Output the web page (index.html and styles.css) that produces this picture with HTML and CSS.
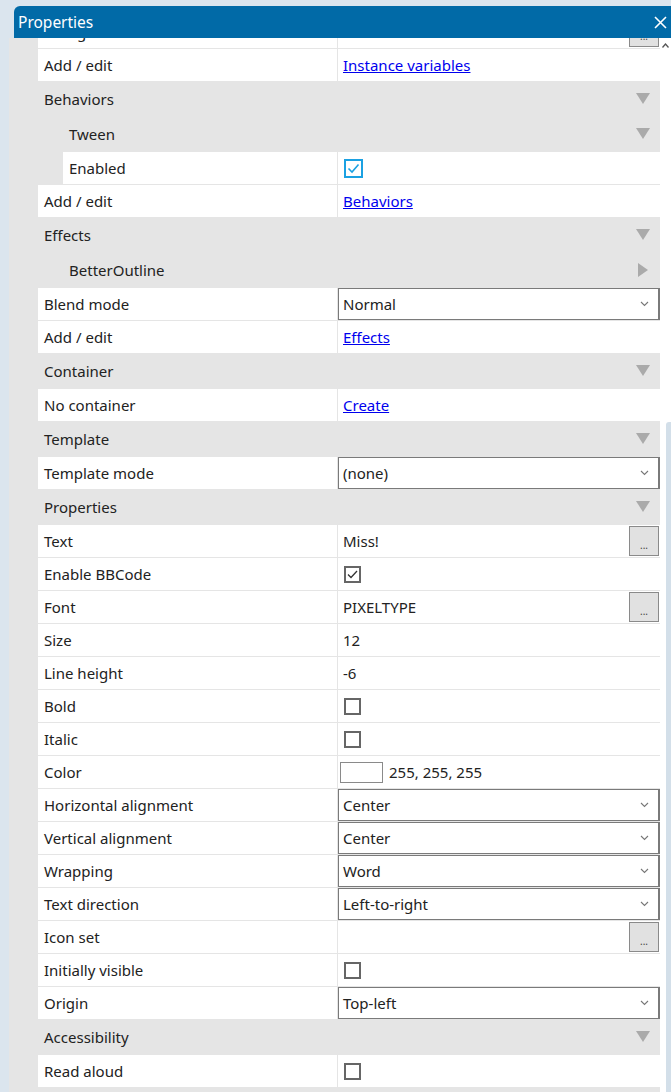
FILE: index.html
```html
<!DOCTYPE html>
<html>
<head>
    <link rel="stylesheet" href="styles.css">
</head>
<body>
    <div class="window">
        <div class="titlebar">
            <span class="title">Properties</span>
            <svg class="close" width="13" height="13" viewBox="0 0 13 13"><path d="M1 1 L12 12 M12 1 L1 12" stroke="#fff" stroke-width="1.6"/></svg>
        </div>
        <div class="viewport">
            <div class="grid">
                <div class="row">
                    <div class="label">String value</div>
                    <div class="value"><button class="dots">...</button></div>
                </div>
                <div class="row">
                    <div class="label">Add / edit</div>
                    <div class="value"><a href="#">Instance variables</a></div>
                </div>
                <div class="category">Behaviors <span class="tri down"></span></div>
                <div class="category sub">Tween <span class="tri down"></span></div>
                <div class="row sub">
                    <div class="label">Enabled</div>
                    <div class="value">
                        <span class="check focus"><svg width="15" height="15" viewBox="0 0 15 15"><path d="M2.5 7.5 L6 11 L12.5 3.5" fill="none" stroke="#1ba1e2" stroke-width="1.6"/></svg></span>
                    </div>
                </div>
                <div class="row">
                    <div class="label">Add / edit</div>
                    <div class="value"><a href="#">Behaviors</a></div>
                </div>
                <div class="category">Effects <span class="tri down"></span></div>
                <div class="category sub">BetterOutline <span class="tri right"></span></div>
                <div class="row">
                    <div class="label">Blend mode</div>
                    <div class="value"><div class="select">Normal <svg class="chev" width="9" height="6" viewBox="0 0 9 6"><path d="M1 1 L4.5 4.5 L8 1" fill="none" stroke="#777" stroke-width="1.1"/></svg></div></div>
                </div>
                <div class="row">
                    <div class="label">Add / edit</div>
                    <div class="value"><a href="#">Effects</a></div>
                </div>
                <div class="category">Container <span class="tri down"></span></div>
                <div class="row">
                    <div class="label">No container</div>
                    <div class="value"><a href="#">Create</a></div>
                </div>
                <div class="category">Template <span class="tri down"></span></div>
                <div class="row">
                    <div class="label">Template mode</div>
                    <div class="value"><div class="select">(none) <svg class="chev" width="9" height="6" viewBox="0 0 9 6"><path d="M1 1 L4.5 4.5 L8 1" fill="none" stroke="#777" stroke-width="1.1"/></svg></div></div>
                </div>
                <div class="category">Properties <span class="tri down"></span></div>
                <div class="row">
                    <div class="label">Text</div>
                    <div class="value">Miss!<button class="dots">...</button></div>
                </div>
                <div class="row">
                    <div class="label">Enable BBCode</div>
                    <div class="value">
                        <span class="check"><svg width="13" height="13" viewBox="0 0 13 13"><path d="M2 6.5 L5 9.5 L11 3" fill="none" stroke="#333" stroke-width="1.3"/></svg></span>
                    </div>
                </div>
                <div class="row">
                    <div class="label">Font</div>
                    <div class="value">PIXELTYPE<button class="dots">...</button></div>
                </div>
                <div class="row">
                    <div class="label">Size</div>
                    <div class="value">12</div>
                </div>
                <div class="row">
                    <div class="label">Line height</div>
                    <div class="value">-6</div>
                </div>
                <div class="row">
                    <div class="label">Bold</div>
                    <div class="value"><span class="check"></span></div>
                </div>
                <div class="row">
                    <div class="label">Italic</div>
                    <div class="value"><span class="check"></span></div>
                </div>
                <div class="row">
                    <div class="label">Color</div>
                    <div class="value color-value"><span class="swatch"></span>255, 255, 255</div>
                </div>
                <div class="row">
                    <div class="label">Horizontal alignment</div>
                    <div class="value"><div class="select">Center <svg class="chev" width="9" height="6" viewBox="0 0 9 6"><path d="M1 1 L4.5 4.5 L8 1" fill="none" stroke="#777" stroke-width="1.1"/></svg></div></div>
                </div>
                <div class="row">
                    <div class="label">Vertical alignment</div>
                    <div class="value"><div class="select">Center <svg class="chev" width="9" height="6" viewBox="0 0 9 6"><path d="M1 1 L4.5 4.5 L8 1" fill="none" stroke="#777" stroke-width="1.1"/></svg></div></div>
                </div>
                <div class="row">
                    <div class="label">Wrapping</div>
                    <div class="value"><div class="select">Word <svg class="chev" width="9" height="6" viewBox="0 0 9 6"><path d="M1 1 L4.5 4.5 L8 1" fill="none" stroke="#777" stroke-width="1.1"/></svg></div></div>
                </div>
                <div class="row">
                    <div class="label">Text direction</div>
                    <div class="value"><div class="select">Left-to-right <svg class="chev" width="9" height="6" viewBox="0 0 9 6"><path d="M1 1 L4.5 4.5 L8 1" fill="none" stroke="#777" stroke-width="1.1"/></svg></div></div>
                </div>
                <div class="row">
                    <div class="label">Icon set</div>
                    <div class="value"><button class="dots">...</button></div>
                </div>
                <div class="row">
                    <div class="label">Initially visible</div>
                    <div class="value"><span class="check"></span></div>
                </div>
                <div class="row">
                    <div class="label">Origin</div>
                    <div class="value"><div class="select">Top-left <svg class="chev" width="9" height="6" viewBox="0 0 9 6"><path d="M1 1 L4.5 4.5 L8 1" fill="none" stroke="#777" stroke-width="1.1"/></svg></div></div>
                </div>
                <div class="category">Accessibility <span class="tri down"></span></div>
                <div class="row">
                    <div class="label">Read aloud</div>
                    <div class="value"><span class="check"></span></div>
                </div>
            </div>
            <div class="scrollbar">
                <svg class="up" width="7" height="5" viewBox="0 0 7 5"><path d="M0.5 4.5 L3.5 1 L6.5 4.5" fill="none" stroke="#555" stroke-width="1.3"/></svg>
                <div class="thumb"></div>
            </div>
        </div>
    </div>
</body>
</html>
```

FILE: styles.css
```css
* {
    margin: 0;
    padding: 0;
    box-sizing: border-box;
}

body {
    height: 1092px;
    overflow: hidden;
    background: #dbe5ee;
    font-family: "Noto Sans", "Open Sans", sans-serif;
    font-size: 15px;
    color: #222;
}

.window {
    margin: 6px 0 0 9px;
}

.titlebar {
    margin-left: 5px;
    height: 32px;
    padding: 0 4px;
    display: flex;
    align-items: center;
    justify-content: space-between;
    background: #016aa7;
    border-top-left-radius: 6px;
    color: #fff;
    position: relative;
    z-index: 1;
}

.title {
    font-size: 15.5px;
}

.viewport {
    display: flex;
    height: 1054px;
    overflow: hidden;
    background: #fff;
}

.grid {
    width: 651px;
    margin-top: -22px;
    background: #e5e5e5;
    display: flex;
    flex-direction: column;
}

.row {
    display: grid;
    grid-template-columns: 299px 1fr;
    height: 33px;
    margin-left: 29px;
    background: #fff;
    border-bottom: 1px solid #e5e5e5;
}

.row.sub {
    margin-left: 54px;
    grid-template-columns: 274px 1fr;
}

.label {
    display: flex;
    align-items: center;
    padding-left: 6px;
    padding-bottom: 1px;
    white-space: nowrap;
}

.value {
    display: flex;
    align-items: center;
    padding-left: 5px;
    border-left: 1px solid #e5e5e5;
}

.value a {
    color: #0000ee;
}

.category {
    height: 35px;
    display: flex;
    align-items: center;
    justify-content: space-between;
    padding: 0 10px 2px 35px;
}

.category.sub {
    padding-left: 60px;
}

.tri {
    display: block;
    width: 0;
    height: 0;
}

.tri.down {
    border-left: 7.5px solid transparent;
    border-right: 7.5px solid transparent;
    border-top: 11px solid #aaa;
}

.tri.right {
    margin-right: 2px;
    border-top: 7.5px solid transparent;
    border-bottom: 7.5px solid transparent;
    border-left: 10px solid #aaa;
}

.dots {
    margin-left: auto;
    margin-right: 1px;
    width: 30px;
    height: 30px;
    background: #e1e1e1;
    border: 1px solid #8a8a8a;
    font-family: "Noto Sans", sans-serif;
    font-size: 10px;
    color: #444;
    padding-top: 8px;
}

.check {
    width: 17px;
    height: 17px;
    margin-left: 1px;
    border: 2px solid #666;
    display: flex;
    align-items: center;
    justify-content: center;
}

.check.focus {
    width: 19px;
    height: 19px;
    border-color: #1ba1e2;
}

.select {
    flex: 1;
    height: 32px;
    margin-left: -5px;
    padding: 0 9px 1px 4px;
    display: flex;
    align-items: center;
    justify-content: space-between;
    border: 1px solid #7a7a7a;
    border-right-width: 2px;
}

.color-value {
    padding-left: 2px;
}

.swatch {
    width: 43px;
    height: 21px;
    border: 1px solid #8a8a8a;
    background: #fff;
    margin-right: 6px;
}

.scrollbar {
    flex: 1;
    display: flex;
    flex-direction: column;
    align-items: flex-end;
}

.up {
    margin: 5px 2px 0 0;
}

.thumb {
    width: 5px;
    margin-top: 374px;
    flex: 1;
    background: #d3dfe9;
    border-top-left-radius: 3px;
}
```
